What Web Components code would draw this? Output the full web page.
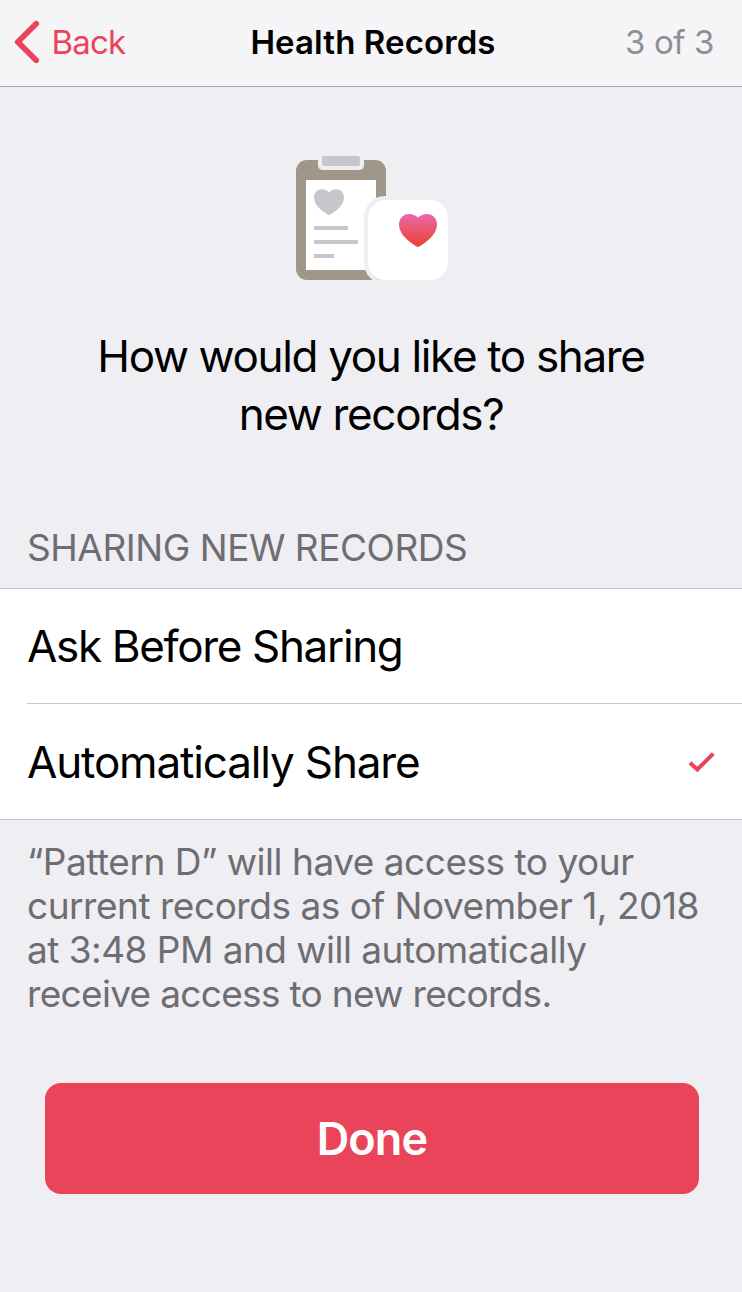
<!DOCTYPE html>
<html lang="en">
<head>
<meta charset="utf-8">
<title>Health Records</title>
<style>
  html, body { margin: 0; background: #efeef3; }
  body { font-family: Inter, "Liberation Sans", sans-serif; color: #000; --tint: #ea445a; --hairline: #c8c7cc; }
</style>
</head>
<body>
<share-screen></share-screen>

<script>
function define(name, html) {
  const template = document.createElement('template');
  template.innerHTML = html;
  customElements.define(name, class extends HTMLElement {
    constructor() {
      super();
      this.attachShadow({ mode: 'open' }).append(template.content.cloneNode(true));
    }
  });
}

define('nav-bar', `
  <style>
    :host { display: grid; grid-template-columns: 1fr auto 1fr; align-items: center; box-sizing: border-box;
      height: 87px; padding: 0 28px 2px 14px; background: #f5f5f7; border-bottom: 1px solid #a9a8ad;
      font-size: 33px; line-height: 42px; white-space: nowrap; }
    .back { display: flex; align-items: center; gap: 11.5px; color: var(--tint); letter-spacing: -.82px; }
    .title { font-weight: 600; letter-spacing: .1px; padding-left: 18px; }
    .step { text-align: right; color: #8f8f93; letter-spacing: -.39px; }
    svg { display: block; }
  </style>
  <div class="back">
    <svg width="26" height="44" viewBox="0 0 26 44"><path d="M22.200 3.800 3.800 22l18.400 18.200" fill="none" stroke="currentColor" stroke-width="5.800" stroke-linecap="round" stroke-linejoin="round"/></svg>
    <slot name="back"></slot>
  </div>
  <div class="title"><slot></slot></div>
  <div class="step"><slot name="step"></slot></div>`);

define('records-icon', `
  <style>:host { display: block; width: 152px; height: 124px; } svg { display: block; }</style>
  <svg width="152" height="124" viewBox="0 0 152 124">
    <defs>
      <linearGradient id="g" x1="0" y1="0" x2="0" y2="1"><stop offset="0" stop-color="#eb68ad"/><stop offset="1" stop-color="#ea402c"/></linearGradient>
      <clipPath id="board"><rect y="4" width="90" height="120" rx="11"/></clipPath>
    </defs>
    <g clip-path="url(#board)">
      <rect y="4" width="90" height="120" fill="#a0968a"/>
      <path d="M22 0H68V8.500Q68 14 62.500 14H27.500Q22 14 22 8.500Z" fill="#efeef3"/>
      <rect x="10" y="24" width="70" height="90" fill="#fff"/>
      <rect x="68" y="40" width="100" height="88" rx="21" fill="#efeef3"/>
    </g>
    <rect x="26" width="38" height="10" rx="2.500" fill="#c7c6cb"/>
    <path d="M33 59.200C29 57 18 50.500 18 41.500C18 36.500 21.500 33.200 25.700 33.200C29 33.200 31.500 34.600 33 36.800C34.500 34.600 37 33.200 40.300 33.200C44.500 33.200 48 36.500 48 41.500C48 50.500 37 57 33 59.200Z" fill="#c7c6cb"/>
    <path d="M18 70h34v4H18zM18 84h44v4H18zM18 98h20v4H18z" fill="#c7c6cb"/>
    <rect x="72" y="44" width="80" height="80" rx="18" fill="#fff"/>
    <path d="M122 91.300C117 88.500 103 80 103 68.600C103 62.200 107.400 57.900 112.800 57.900C117 57.900 120.200 59.700 122 61.500C123.800 59.700 127 57.900 131.200 57.900C136.600 57.900 141 62.200 141 68.600C141 80 127 88.500 122 91.300Z" fill="url(#g)"/>
  </svg>`);

define('page-hero', `
  <style>
    :host { display: flex; flex-direction: column; align-items: center; gap: 47px; padding: 69px 40px 83px; }
    records-icon { margin-left: 2px; }
    .head { font-size: 44px; line-height: 58px; letter-spacing: -1.34px; text-align: center; width: 620px; }
  </style>
  <records-icon></records-icon>
  <div class="head"><slot></slot></div>`);

define('option-group', `
  <style>
    :host { display: block; }
    .label { padding: 0 27px 18px; font-size: 37px; line-height: 44px; letter-spacing: -.46px; color: #6d6d72; }
    .rows { background: #fff; border: solid var(--hairline); border-width: 1px 0; }
    .note { padding: 20px 27px 0; font-size: 37px; line-height: 44px; color: #6d6d72; white-space: nowrap; }
  </style>
  <div class="label"><slot name="label"></slot></div>
  <div class="rows"><slot></slot></div>
  <div class="note"><slot name="note"></slot></div>`);

define('option-row', `
  <style>
    :host { display: block; padding-left: 27px; letter-spacing: -1.34px; }
    :host([selected]) { letter-spacing: -1.15px; }
    .in { display: flex; align-items: center; justify-content: space-between; box-sizing: border-box; height: 115px;
      padding-right: 27px; font-size: 44px; line-height: 56px; }
    :host(:not(:last-of-type)) .in { border-bottom: 1px solid var(--hairline); }
    svg { display: none; }
    :host([selected]) svg { display: block; }
  </style>
  <div class="in"><span><slot></slot></span>
    <svg width="27" height="22" viewBox="0 0 27 22"><path d="M2 11.800 9.300 18.500 25.300 2.600" fill="none" stroke="var(--tint)" stroke-width="4"/></svg>
  </div>`);

define('primary-button', `
  <style>
    :host { display: block; margin: 67px 43px 0 45px; }
    button { display: block; width: 100%; height: 111px; margin: 0; padding: 0; border: 0; border-radius: 16px;
      background: var(--tint); color: #fff; font: 600 45px/56px Inter, "Liberation Sans", sans-serif; letter-spacing: -.9px; }
  </style>
  <button type="button"><slot></slot></button>`);

define('share-screen', `
  <style>
    :host { display: block; width: 742px; height: 1292px; overflow: hidden; background: #efeef3; }
    [slot=note] { display: block; letter-spacing: -.47px; }
    .tight { letter-spacing: -.68px; }
  </style>
  <nav-bar><span slot="back">Back</span>Health Records<span slot="step">3 of 3</span></nav-bar>
  <page-hero>How would you like to share<br>new records?</page-hero>
  <option-group>
    <span slot="label">SHARING NEW RECORDS</span>
    <option-row>Ask Before Sharing</option-row>
    <option-row selected>Automatically Share</option-row>
    <span slot="note">“Pattern D” will have access to your<br>current records as of November 1, 2018<br><span style="letter-spacing:-.52px">at 3:48 PM and will automatically</span><br><span class="tight">receive access to new records.</span></span>
  </option-group>
  <primary-button>Done</primary-button>`);
</script>
</body>
</html>
